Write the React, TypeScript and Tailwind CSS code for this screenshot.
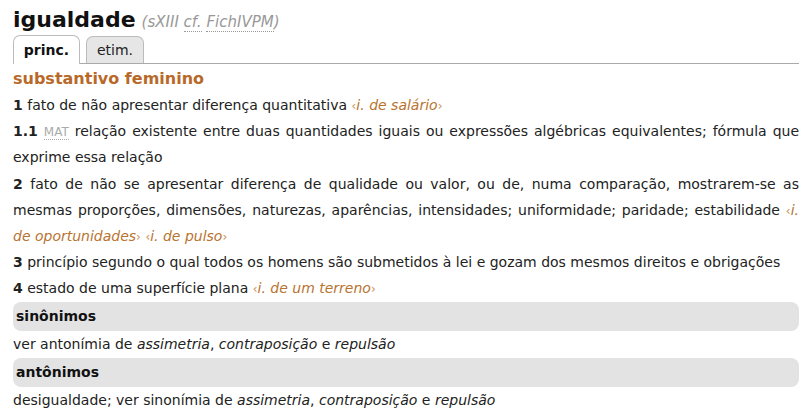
import React from "react";

const Ex = ({ children }: { children: React.ReactNode }) => (
  <span className="italic text-[#b8732f]">
    <span className="not-italic text-[#c9915a] text-[12px] leading-none">‹</span>
    {children}
    <span className="not-italic text-[#c9915a] text-[12px] leading-none">›</span>
  </span>
);

export default function App() {
  return (
    <div
      className="w-[806px] h-[420px] bg-white text-[#222] pl-[13px] pr-[7px] overflow-hidden"
      style={{ fontFamily: '"DejaVu Sans", Verdana, sans-serif' }}
    >
      <div className="flex items-baseline pt-[5px] h-[35px]">
        <span className="text-[22px] font-bold text-[#111] leading-[30px]">igualdade</span>
        <span className="ml-[6px] text-[15px] italic text-[#999]">
          (sXIII{" "}
          <span className="border-b border-dotted border-[#999]">cf.</span>{" "}
          <span className="border-b border-dotted border-[#999]">FichIVPM</span>)
        </span>
      </div>
      <div className="flex items-end gap-[6px] border-b border-[#aaa] h-[29px] pl-0">
        <div className="h-[29px] w-[67px] bg-white border border-b-0 border-[#bbb] rounded-t-[7px] flex items-center justify-center text-[14px] font-bold text-[#111] mb-[-1px] relative">
          princ.
        </div>
        <div className="h-[27px] w-[58px] bg-[#e6e6e6] border border-b-0 border-[#bbb] rounded-t-[7px] flex items-center justify-center text-[14px] text-[#222]">
          etim.
        </div>
      </div>
      <div className="text-[16px] font-bold text-[#b8692a] leading-[26px] mt-[2px]">
        substantivo feminino
      </div>
      <div className="text-[14px] leading-[26.2px] text-justify">
        <p>
          <b>1</b> fato de não apresentar diferença quantitativa <Ex>i. de salário</Ex>
        </p>
        <p>
          <b>1.1</b>{" "}
          <span className="text-[12px] leading-none text-[#aaa] border-b border-dotted border-[#aaa]">MAT</span>{" "}
          relação existente entre duas quantidades iguais ou expressões algébricas equivalentes; fórmula que exprime essa relação
        </p>
        <p>
          <b>2</b> fato de não se apresentar diferença de qualidade ou valor, ou de, numa comparação, mostrarem-se as mesmas proporções, dimensões, naturezas, aparências, intensidades; uniformidade; paridade; estabilidade{" "}
          <Ex>i. de oportunidades</Ex> <Ex>i. de pulso</Ex>
        </p>
        <p>
          <b>3</b> princípio segundo o qual todos os homens são submetidos à lei e gozam dos mesmos direitos e obrigações
        </p>
        <p>
          <b>4</b> estado de uma superfície plana <Ex>i. de um terreno</Ex>
        </p>
      </div>
      <div className="h-[29px] bg-[#e3e3e3] rounded-[8px] flex items-center px-[3px] text-[14px] font-bold text-[#111]">
        sinônimos
      </div>
      <div className="text-[14px] leading-[27px]">
        ver antonímia de <i>assimetria</i>, <i>contraposição</i> e <i>repulsão</i>
      </div>
      <div className="h-[29px] bg-[#e3e3e3] rounded-[8px] flex items-center px-[3px] text-[14px] font-bold text-[#111]">
        antônimos
      </div>
      <div className="text-[14px] leading-[26px]">
        desigualdade; ver sinonímia de <i>assimetria</i>, <i>contraposição</i> e <i>repulsão</i>
      </div>
    </div>
  );
}
